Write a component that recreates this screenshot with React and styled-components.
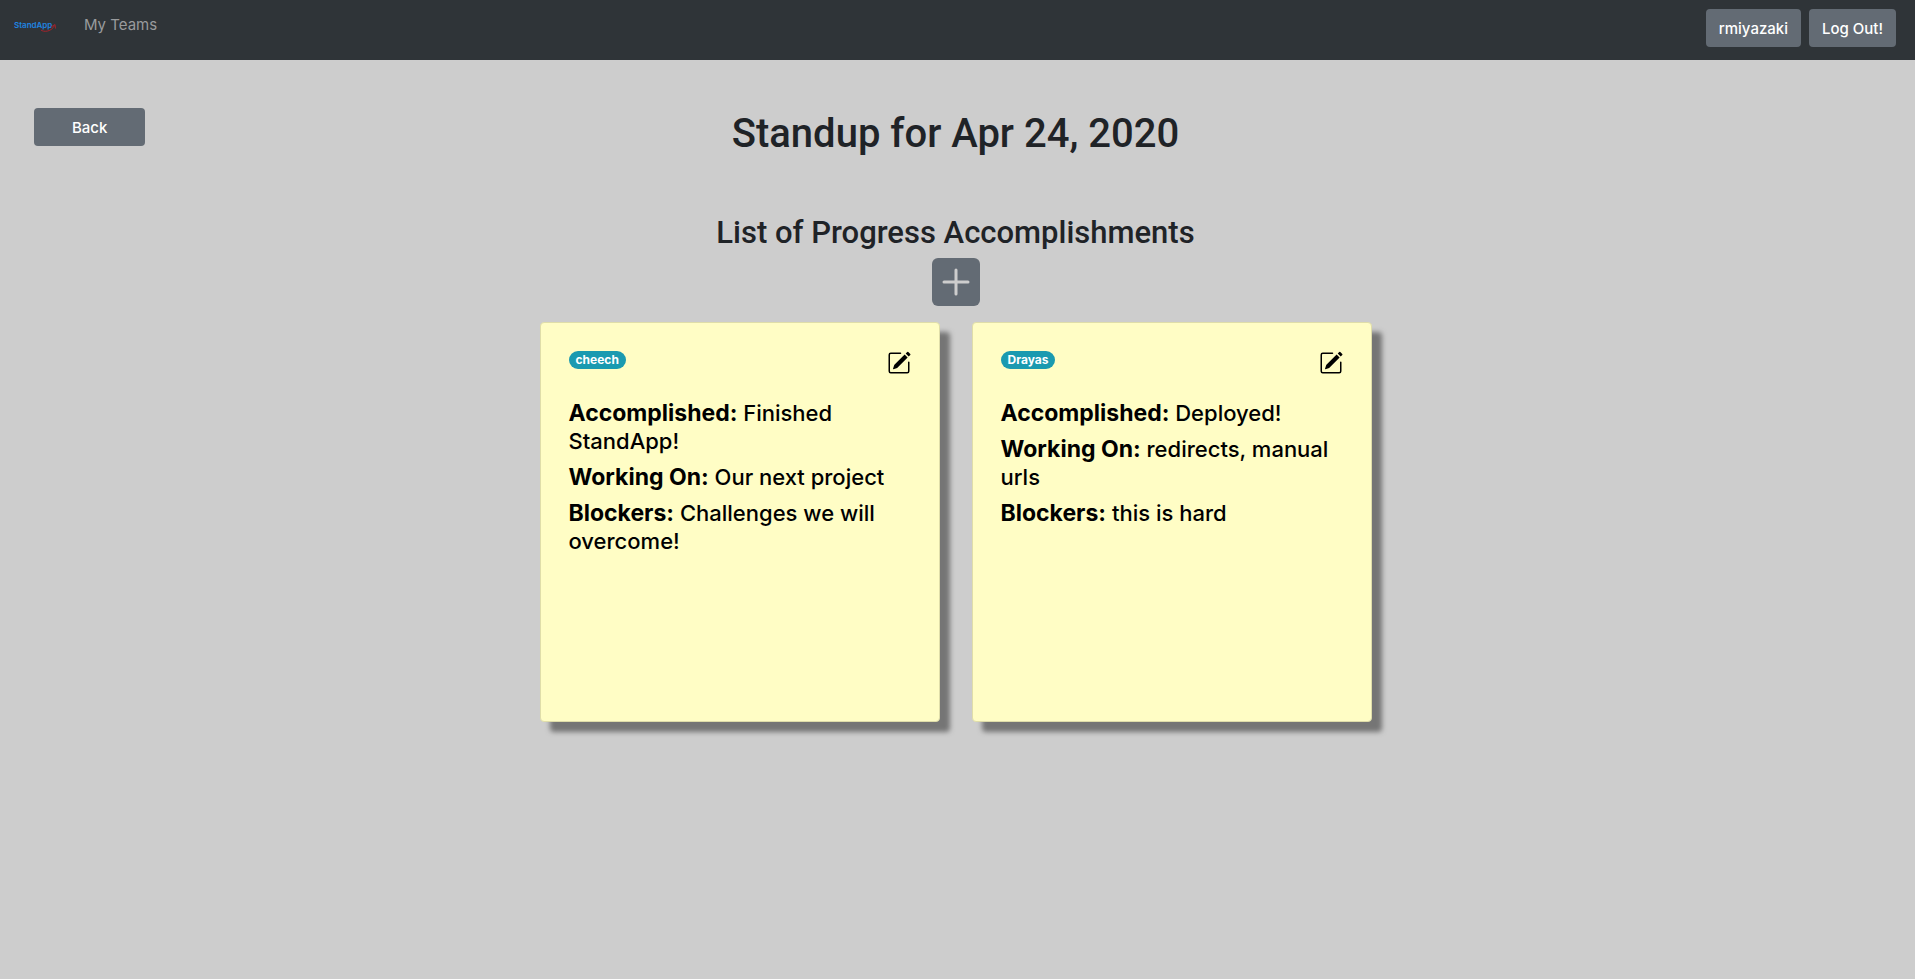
import React from "react";
import styled, { createGlobalStyle } from "styled-components";

const GlobalStyle = createGlobalStyle`
  *, *::before, *::after { box-sizing: border-box; }
  body {
    margin: 0;
    background: #cdcdcd;
    color: #1f2327;
    font-family: Inter, "Liberation Sans", sans-serif;
    font-size: 15px;
    line-height: 24px;
  }
`;

const Navbar = styled.nav`
  display: flex;
  align-items: flex-start;
  justify-content: space-between;
  height: 60px;
  padding: 9px 19px 0 14px;
  background: #2f3438;
`;

const NavLinks = styled.div`
  display: flex;
  align-items: center;
  gap: 27px;
  padding-top: 4px;
`;

const LogoLink = styled.a`
  display: block;
  width: 43px;
  height: 24px;
`;

const NavLink = styled.a`
  color: #999b9d;
  text-decoration: none;
`;

const NavActions = styled.div`
  display: flex;
  gap: 8px;
`;

const Button = styled.button`
  height: 38px;
  padding: 1px ${(p) => (p.$wide ? 38 : 13)}px 0;
  border: 0;
  border-radius: 4px;
  background: #636b74;
  color: #fff;
  font: inherit;
  font-weight: 500;
  white-space: nowrap;
  cursor: pointer;
`;

const Header = styled.header`
  display: grid;
  grid-template-columns: 1fr auto 1fr;
  align-items: start;
  padding: 48px 38px 0 34px;
`;

const BackSlot = styled.div`
  justify-self: start;
`;

const Title = styled.h1`
  margin: 0;
  font-family: Roboto, sans-serif;
  font-size: 40px;
  line-height: 52px;
  font-weight: 500;
`;

const Progress = styled.main`
  display: flex;
  flex-direction: column;
  align-items: center;
  padding: 52px 38px 48px 34px;
`;

const Subtitle = styled.h2`
  margin: 0 0 4px;
  font-family: Roboto, sans-serif;
  font-size: 31px;
  line-height: 42px;
  font-weight: 500;
`;

const AddButton = styled.button`
  display: block;
  width: 48px;
  height: 48px;
  padding: 0;
  border: 0;
  border-radius: 6px;
  background: #636b74;
  color: #cdcdcd;
  cursor: pointer;
`;

const Notes = styled.div`
  display: flex;
  flex-wrap: wrap;
  justify-content: center;
  gap: 32px;
  margin-top: 16px;
`;

const Note = styled.article`
  width: 400px;
  min-height: 400px;
  padding: 28px;
  border: 1px solid #dfdda9;
  border-radius: 4px;
  background: #fffdc5;
  box-shadow: 10px 10px 5px #757575;
  color: #000;
`;

const NoteTop = styled.div`
  display: flex;
  align-items: flex-start;
  justify-content: space-between;
  margin-bottom: 24px;
`;

const Badge = styled.span`
  padding: 0 7px;
  border-radius: 9px;
  background: #1a9ab0;
  color: #fff;
  font-size: 12px;
  line-height: 18px;
  font-weight: 700;
`;

const EditButton = styled.button`
  display: block;
  width: 24px;
  height: 24px;
  padding: 0;
  border: 0;
  background: none;
  color: inherit;
  cursor: pointer;
`;

const Entry = styled.p`
  margin: 0 0 8px;
  font-size: 22px;
  line-height: 28px;
  font-weight: 500;
`;

const Label = styled.strong`
  font-size: 23px;
  font-weight: 700;
`;

const Logo = () => (
  <svg width="43" height="24" viewBox="0 0 43 24" aria-hidden="true">
    <text x="0" y="15" fill="#1f85e0" fontFamily="Inter, sans-serif" fontSize="8" fontWeight="600">
      StandApp
    </text>
    <path d="M27 17c2 2 10 2.500 13.500-4.500M37 14l4-2.500.5 4" fill="none" stroke="#a3232b" strokeWidth="1" />
  </svg>
);

const PlusIcon = () => (
  <svg width="48" height="48" viewBox="0 0 16 16" fill="none" stroke="currentColor" strokeLinecap="round" aria-hidden="true">
    <path d="M8 4v8M4 8h8" />
  </svg>
);

const EditIcon = () => (
  <svg width="24" height="24" viewBox="0 0 16 16" fill="currentColor" aria-hidden="true">
    <path d="M15.502 1.940a.5.5 0 010 .706L14.459 3.690l-2-2L13.502.646a.5.5 0 01.707 0l1.293 1.293zm-1.750 2.456l-2-2L4.939 9.210a.5.5 0 00-.121.196l-.805 2.414a.25.25 0 00.316.316l2.414-.805a.5.5 0 00.196-.12l6.813-6.814z" />
    <path
      fillRule="evenodd"
      d="M1 13.500A1.500 1.500 0 002.500 15h11a1.500 1.500 0 001.500-1.500v-6a.5.5 0 00-1 0v6a.5.5 0 01-.5.5h-11a.5.5 0 01-.5-.5v-11a.5.5 0 01.5-.5H9a.5.5 0 000-1H2.500A1.500 1.500 0 001 2.500v11z"
    />
  </svg>
);

const standups = [
  {
    user: "cheech",
    accomplished: "Finished StandApp!",
    workingOn: "Our next project",
    blockers: "Challenges we will overcome!",
  },
  {
    user: "Drayas",
    accomplished: "Deployed!",
    workingOn: "redirects, manual urls",
    blockers: "this is hard",
  },
];

export default function App() {
  return (
    <>
      <GlobalStyle />
      <Navbar>
        <NavLinks>
          <LogoLink href="#" aria-label="StandApp">
            <Logo />
          </LogoLink>
          <NavLink href="#">My Teams</NavLink>
        </NavLinks>
        <NavActions>
          <Button type="button">rmiyazaki</Button>
          <Button type="button">Log Out!</Button>
        </NavActions>
      </Navbar>
      <Header>
        <BackSlot>
          <Button type="button" $wide>Back</Button>
        </BackSlot>
        <Title>Standup for Apr 24, 2020</Title>
      </Header>
      <Progress>
        <Subtitle>List of Progress Accomplishments</Subtitle>
        <AddButton type="button" aria-label="Add accomplishment">
          <PlusIcon />
        </AddButton>
        <Notes>
          {standups.map((s) => (
            <Note key={s.user}>
              <NoteTop>
                <Badge>{s.user}</Badge>
                <EditButton type="button" aria-label={`Edit ${s.user}`}>
                  <EditIcon />
                </EditButton>
              </NoteTop>
              <Entry><Label>Accomplished:</Label> {s.accomplished}</Entry>
              <Entry><Label>Working On:</Label> {s.workingOn}</Entry>
              <Entry><Label>Blockers:</Label> {s.blockers}</Entry>
            </Note>
          ))}
        </Notes>
      </Progress>
    </>
  );
}
